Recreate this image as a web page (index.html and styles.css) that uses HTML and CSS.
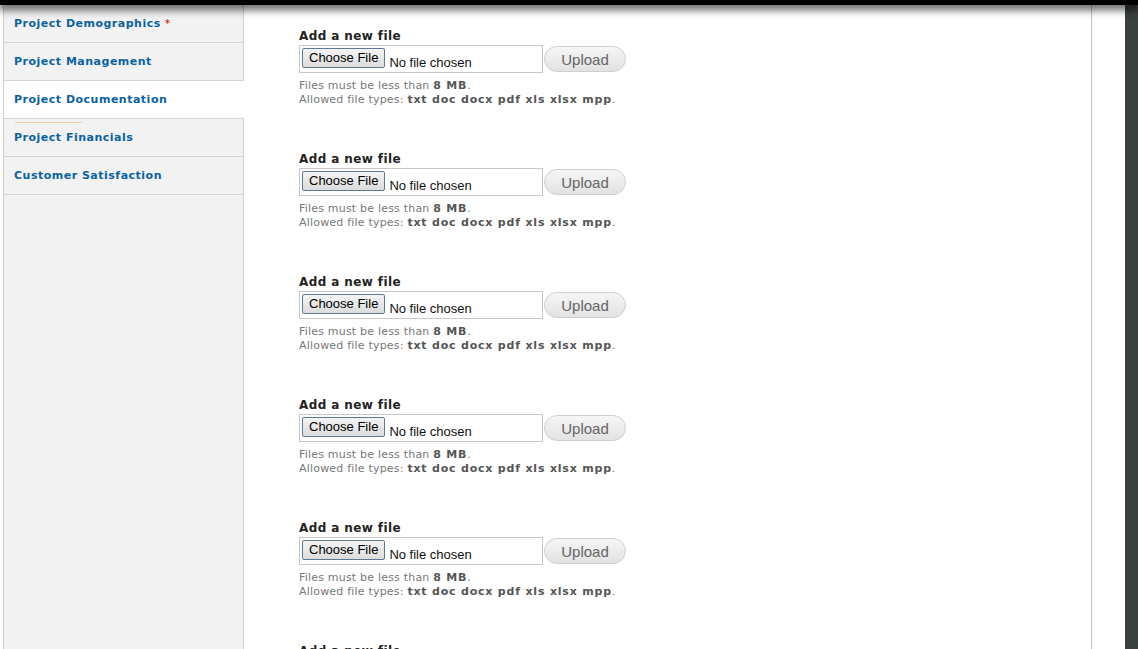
FILE: index.html
```html
<!DOCTYPE html>
<html>
<head>
<meta charset="utf-8">
<link rel="stylesheet" href="styles.css">
</head>
<body>
<div class="topbar"></div>
<div class="page">
  <div class="left-gap"></div>
  <nav class="sidebar">
    <a class="tab">Project Demographics <span class="req">*</span></a>
    <a class="tab">Project Management</a>
    <a class="tab active">Project Documentation</a>
    <a class="tab accent">Project Financials</a>
    <a class="tab">Customer Satisfaction</a>
  </nav>
  <main class="main">
    <div class="group">
      <div class="label">Add a new file</div>
      <div class="row">
        <div class="file"><span class="choose">Choose File</span><span class="nofile">No file chosen</span></div>
        <span class="upload">Upload</span>
      </div>
      <div class="desc">Files must be less than <b>8 MB</b>.<br>Allowed file types: <b>txt doc docx pdf xls xlsx mpp</b>.</div>
    </div>
    <div class="group">
      <div class="label">Add a new file</div>
      <div class="row">
        <div class="file"><span class="choose">Choose File</span><span class="nofile">No file chosen</span></div>
        <span class="upload">Upload</span>
      </div>
      <div class="desc">Files must be less than <b>8 MB</b>.<br>Allowed file types: <b>txt doc docx pdf xls xlsx mpp</b>.</div>
    </div>
    <div class="group">
      <div class="label">Add a new file</div>
      <div class="row">
        <div class="file"><span class="choose">Choose File</span><span class="nofile">No file chosen</span></div>
        <span class="upload">Upload</span>
      </div>
      <div class="desc">Files must be less than <b>8 MB</b>.<br>Allowed file types: <b>txt doc docx pdf xls xlsx mpp</b>.</div>
    </div>
    <div class="group">
      <div class="label">Add a new file</div>
      <div class="row">
        <div class="file"><span class="choose">Choose File</span><span class="nofile">No file chosen</span></div>
        <span class="upload">Upload</span>
      </div>
      <div class="desc">Files must be less than <b>8 MB</b>.<br>Allowed file types: <b>txt doc docx pdf xls xlsx mpp</b>.</div>
    </div>
    <div class="group">
      <div class="label">Add a new file</div>
      <div class="row">
        <div class="file"><span class="choose">Choose File</span><span class="nofile">No file chosen</span></div>
        <span class="upload">Upload</span>
      </div>
      <div class="desc">Files must be less than <b>8 MB</b>.<br>Allowed file types: <b>txt doc docx pdf xls xlsx mpp</b>.</div>
    </div>
    <div class="group">
      <div class="label">Add a new file</div>
    </div>
  </main>
  <div class="gutter"></div>
  <div class="dark"></div>
</div>
</body>
</html>
```

FILE: styles.css
```css
html, body {
  margin: 0;
  padding: 0;
  height: 100%;
  overflow: hidden;
  background: #fff;
}
body {
  font-family: "DejaVu Sans", Verdana, sans-serif;
  color: #222;
}
.topbar {
  position: relative;
  z-index: 2;
  height: 5px;
  background: #000;
  box-shadow: 0 2px 10px 2px rgba(0,0,0,0.75);
}
.page {
  display: flex;
  height: 644px;
}
.left-gap {
  width: 3px;
  background: #fff;
}
.sidebar {
  width: 239px;
  background: #f2f2f2;
  border-left: 1px solid #cfcfcf;
  border-right: 1px solid #cfcfcf;
  display: flex;
  flex-direction: column;
}
.tab {
  display: flex;
  align-items: center;
  height: 37px;
  padding-left: 10px;
  border-bottom: 1px solid #d4d4d4;
  font-size: 11px;
  font-weight: bold;
  color: #0a62a0;
  letter-spacing: 0.5px;
  position: relative;
}
.tab.active {
  background: #fff;
  margin-right: -1px;
}
.tab.accent::before {
  content: "";
  position: absolute;
  left: 11px;
  top: 3px;
  width: 67px;
  height: 1px;
  background: #f0d09a;
}
.req {
  color: #c00;
  font-weight: normal;
  margin-left: 4px;
  font-size: 11px;
}
.main {
  flex: 1;
  padding: 24px 0 0 55px;
}
.group {
  height: 123px;
}
.label {
  font-size: 12px;
  font-weight: bold;
  color: #222;
  letter-spacing: 0.4px;
  line-height: 14px;
  margin-bottom: 2px;
}
.row {
  display: flex;
  align-items: center;
}
.file {
  width: 240px;
  height: 26px;
  border: 1px solid #c8c8c8;
  display: flex;
  align-items: center;
  padding-left: 2px;
  background: #fff;
}
.choose {
  font-family: "Liberation Sans", Arial, sans-serif;
  font-size: 13px;
  color: #000;
  border: 1px solid #5b7a95;
  border-radius: 2px;
  background: linear-gradient(#f4f4f4, #dcdcdc);
  height: 18px;
  line-height: 18px;
  padding: 0 6px;
  margin-top: -3px;
}
.nofile {
  font-family: "Liberation Sans", Arial, sans-serif;
  font-size: 13px;
  color: #111;
  margin-left: 4px;
  margin-top: 6px;
}
.upload {
  width: 80px;
  height: 24px;
  margin-left: 1px;
  border: 1px solid #cfcfcf;
  border-radius: 13px;
  background: linear-gradient(#f6f6f6, #e2e2e2);
  font-family: "Liberation Sans", Arial, sans-serif;
  font-size: 15px;
  color: #666;
  display: flex;
  align-items: center;
  justify-content: center;
}
.desc {
  font-size: 11px;
  line-height: 14px;
  color: #777;
  margin-top: 6px;
  letter-spacing: 0.2px;
}
.desc b {
  color: #555;
  letter-spacing: 0.8px;
}
.gutter {
  width: 33px;
  border-left: 1px solid #c4c4c4;
  background: #fff;
}
.dark {
  width: 13px;
  background: #3a3f3f;
}
```
